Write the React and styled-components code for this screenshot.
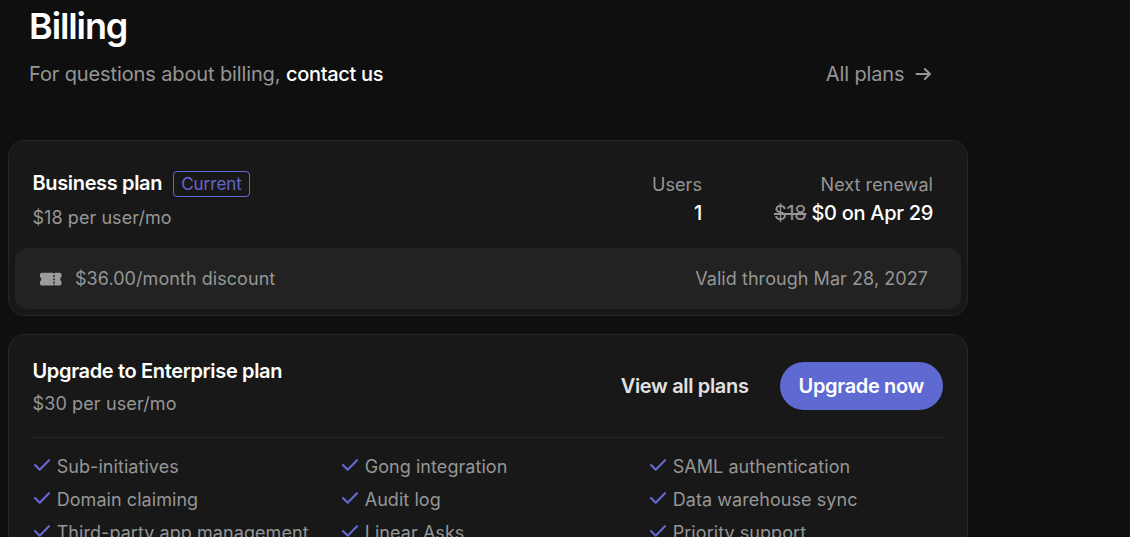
import React from "react";
import styled, { createGlobalStyle } from "styled-components";

const GlobalStyle = createGlobalStyle`
  * {
    box-sizing: border-box;
  }

  body {
    margin: 0;
    background: #0f0f0f;
    color: #969696;
    font-family: Inter, "Liberation Sans", sans-serif;
    font-size: 18px;
    letter-spacing: 0.06px;
    height: 537px;
    overflow: hidden;
  }

  button {
    font-family: inherit;
  }
`;

const Page = styled.main`
  width: 960px;
  height: 537px;
  margin-left: 8px;
  padding-top: 4px;
  overflow: hidden;
`;

const PageHeader = styled.header`
  padding: 0 36px 0 21px;
`;

const PageTitle = styled.h1`
  margin: 0 0 12px;
  color: #ffffff;
  font-size: 36px;
  font-weight: 600;
  line-height: 44px;
  letter-spacing: -1.1px;
`;

const HeaderRow = styled.div`
  display: flex;
  justify-content: space-between;
  align-items: center;
  font-size: 20px;
  line-height: 28px;
  letter-spacing: -0.12px;
`;

const ContactLink = styled.a`
  color: #ffffff;
  font-weight: 500;
  letter-spacing: -0.3px;
`;

const PlansLink = styled.a`
  display: flex;
  align-items: center;
  gap: 10.5px;
`;

const Card = styled.section`
  margin-top: ${(props) => props.$top}px;
  border: 1px solid #262626;
  border-radius: 16px;
  background: #181818;
`;

const CurrentTop = styled.div`
  display: flex;
  justify-content: space-between;
  height: 107px;
  padding: 30px 34px 0 23.5px;
`;

const TitleRow = styled.div`
  display: flex;
  align-items: flex-start;
  gap: 11px;
  height: 26px;
  margin-bottom: 7px;
`;

const PlanTitle = styled.h2`
  margin: 0;
  color: #ffffff;
  font-size: 20px;
  font-weight: 600;
  line-height: 24px;
  letter-spacing: -0.35px;
`;

const Badge = styled.span`
  height: 26px;
  padding: 0 7px;
  border: 1px solid #6466cf;
  border-radius: 4px;
  color: #6466cf;
  font-size: 17px;
  line-height: 25px;
  letter-spacing: 0;
`;

const Price = styled.div`
  line-height: 28px;
`;

const Stats = styled.div`
  display: flex;
  gap: 72px;
  text-align: right;
`;

const StatLabel = styled.div`
  line-height: 28px;
`;

const StatValue = styled.div`
  color: #ffffff;
  font-size: 20px;
  font-weight: 500;
  line-height: 28px;
  letter-spacing: -0.3px;

  s {
    color: #969696;
    font-weight: 400;
  }
`;

const Discount = styled.div`
  display: flex;
  justify-content: space-between;
  align-items: center;
  height: 61px;
  margin: 0 6px 6px;
  padding: 0 33px 0 24px;
  border-radius: 12px;
  background: #222222;
`;

const DiscountName = styled.div`
  display: flex;
  align-items: center;
  gap: 13px;
`;

const UpgradeCard = styled(Card)`
  height: 260px;
  padding: 0 23px;
`;

const UpgradeTop = styled.div`
  display: flex;
  justify-content: space-between;
  height: 103px;
  padding: 24px 1px 0 0.5px;
  border-bottom: 1px solid #262626;

  ${Price} {
    margin-top: 7px;
    letter-spacing: 0.12px;
  }
`;

const Actions = styled.div`
  display: flex;
  gap: 12px;
  padding-top: 3px;
`;

const Button = styled.button`
  height: 48px;
  padding: 0 19px;
  border: 0;
  border-radius: 24px;
  background: ${(props) => (props.$primary ? "#5e69d1" : "transparent")};
  color: ${(props) => (props.$primary ? "#ffffff" : "#e2e2e2")};
  font-size: 20px;
  font-weight: 600;
  letter-spacing: -0.34px;
`;

const Features = styled.ul`
  display: grid;
  grid-template-columns: 308px 308px 1fr;
  grid-auto-rows: 33px;
  margin: 0;
  padding: 12px 0 0 2px;
  list-style: none;
`;

const Feature = styled.li`
  display: flex;
  align-items: center;
  gap: 6.7px;
  white-space: nowrap;

  svg {
    position: relative;
    top: -2px;
  }
`;

const ArrowIcon = () => (
  <svg width="17" height="14" viewBox="0 0 17 14" fill="none">
    <path
      d="M1.5 7H15M9.8 2L15 7L9.8 12"
      stroke="#969696"
      strokeWidth="2"
      strokeLinecap="round"
      strokeLinejoin="round"
    />
  </svg>
);

const CheckIcon = () => (
  <svg width="16" height="12" viewBox="0 0 16 12" fill="none">
    <path
      d="M1 6L5.7 10.7L15 1.2"
      stroke="#6767d2"
      strokeWidth="2.1"
      strokeLinecap="round"
      strokeLinejoin="round"
    />
  </svg>
);

const TicketIcon = () => (
  <svg width="23" height="14" viewBox="0 0 23 14">
    <path
      d="M2.5 .8H14Q15 2.2 16 .8H21Q22.5 .8 22.5 2.5V5Q21.2 5.6 21.2 7.2T22.5 9.4V11.8Q22.5 13.5 21 13.5H16Q15 12.1 14 13.5H2.5Q1 13.5 1 11.8V9.4Q2.3 8.8 2.3 7.2T1 5V2.5Q1 .8 2.5 .8Z"
      fill="#9c9c9c"
    />
    <path
      d="M15 3.3V11.4"
      stroke="#222222"
      strokeWidth="1.6"
      strokeDasharray="1.7 1.5"
    />
  </svg>
);

const features = [
  "Sub-initiatives",
  "Gong integration",
  "SAML authentication",
  "Domain claiming",
  "Audit log",
  "Data warehouse sync",
  "Third-party app management",
  "Linear Asks",
  "Priority support",
];

const App = () => {
  return (
    <>
      <GlobalStyle />
      <Page>
        <PageHeader>
          <PageTitle>Billing</PageTitle>
          <HeaderRow>
            <div>
              For questions about billing, <ContactLink>contact us</ContactLink>
            </div>
            <PlansLink>
              All plans
              <ArrowIcon />
            </PlansLink>
          </HeaderRow>
        </PageHeader>

        <Card $top={52}>
          <CurrentTop>
            <div>
              <TitleRow>
                <PlanTitle>Business plan</PlanTitle>
                <Badge>Current</Badge>
              </TitleRow>
              <Price>$18 per user/mo</Price>
            </div>
            <Stats>
              <div>
                <StatLabel>Users</StatLabel>
                <StatValue>1</StatValue>
              </div>
              <div>
                <StatLabel>Next renewal</StatLabel>
                <StatValue>
                  <s>$18</s> $0 on Apr 29
                </StatValue>
              </div>
            </Stats>
          </CurrentTop>
          <Discount>
            <DiscountName>
              <TicketIcon />
              $36.00/month discount
            </DiscountName>
            <div>Valid through Mar 28, 2027</div>
          </Discount>
        </Card>

        <UpgradeCard $top={18}>
          <UpgradeTop>
            <div>
              <PlanTitle>Upgrade to Enterprise plan</PlanTitle>
              <Price>$30 per user/mo</Price>
            </div>
            <Actions>
              <Button>View all plans</Button>
              <Button $primary>Upgrade now</Button>
            </Actions>
          </UpgradeTop>
          <Features>
            {features.map((name) => (
              <Feature key={name}>
                <CheckIcon />
                {name}
              </Feature>
            ))}
          </Features>
        </UpgradeCard>
      </Page>
    </>
  );
};

export default App;
